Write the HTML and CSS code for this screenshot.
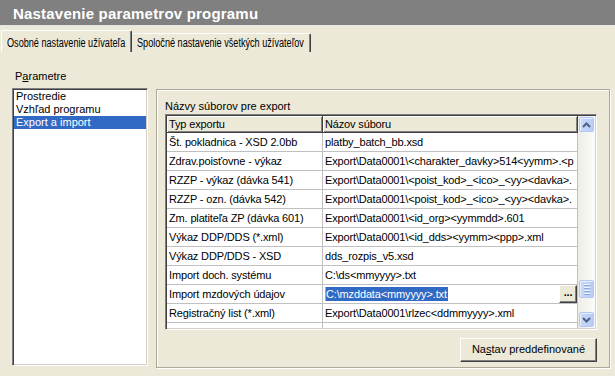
FILE: index.html
```html
<!DOCTYPE html>
<html lang="sk">
<head>
  <meta charset="utf-8">
  <title>Nastavenie parametrov programu</title>
  <link rel="stylesheet" href="styles.css">
</head>
<body>
  <div class="window">
    <div class="title-bar">Nastavenie parametrov programu</div>

    <div class="tabs">
      <div class="tab active"><span class="tab-text">Osobné nastavenie užívateľa</span></div>
      <div class="tab"><span class="tab-text">Spoločné nastavenie všetkých užívateľov</span></div>
    </div>

    <div class="tab-page">
      <div class="side">
        <div class="side-label">P<u>a</u>rametre</div>
        <div class="listbox">
          <div class="list-item">Prostredie</div>
          <div class="list-item">Vzhľad programu</div>
          <div class="list-item selected">Export a import</div>
        </div>
      </div>

      <div class="group">
        <div class="group-label">Názvy súborov pre export</div>
        <div class="grid">
          <div class="grid-table">
            <div class="row header">
              <div class="cell">Typ exportu</div>
              <div class="cell">Názov súboru</div>
            </div>
            <div class="row">
              <div class="cell">Št. pokladnica - XSD 2.0bb</div>
              <div class="cell">platby_batch_bb.xsd</div>
            </div>
            <div class="row">
              <div class="cell">Zdrav.poisťovne - výkaz</div>
              <div class="cell">Export\Data0001\&lt;charakter_davky&gt;514&lt;yymm&gt;.&lt;p</div>
            </div>
            <div class="row">
              <div class="cell">RZZP - výkaz (dávka 541)</div>
              <div class="cell">Export\Data0001\&lt;poist_kod&gt;_&lt;ico&gt;_&lt;yy&gt;&lt;davka&gt;.</div>
            </div>
            <div class="row">
              <div class="cell">RZZP - ozn. (dávka 542)</div>
              <div class="cell">Export\Data0001\&lt;poist_kod&gt;_&lt;ico&gt;_&lt;yy&gt;&lt;davka&gt;.</div>
            </div>
            <div class="row">
              <div class="cell">Zm. platiteľa ZP (dávka 601)</div>
              <div class="cell">Export\Data0001\&lt;id_org&gt;&lt;yymmdd&gt;.601</div>
            </div>
            <div class="row">
              <div class="cell">Výkaz DDP/DDS (*.xml)</div>
              <div class="cell">Export\Data0001\&lt;id_dds&gt;&lt;yymm&gt;&lt;ppp&gt;.xml</div>
            </div>
            <div class="row">
              <div class="cell">Výkaz DDP/DDS - XSD</div>
              <div class="cell">dds_rozpis_v5.xsd</div>
            </div>
            <div class="row">
              <div class="cell">Import doch. systému</div>
              <div class="cell">C:\ds&lt;mmyyyy&gt;.txt</div>
            </div>
            <div class="row">
              <div class="cell">Import mzdových údajov</div>
              <div class="cell editing">
                <span class="selection">C:\mzddata&lt;mmyyyy&gt;.txt</span>
                <span class="dots-btn">...</span>
              </div>
            </div>
            <div class="row">
              <div class="cell">Registračný list (*.xml)</div>
              <div class="cell">Export\Data0001\rlzec&lt;ddmmyyyy&gt;.xml</div>
            </div>
            <div class="row">
              <div class="cell"></div>
              <div class="cell"></div>
            </div>
          </div>

          <div class="scrollbar">
            <div class="sb-button">
              <svg width="9" height="6" viewBox="0 0 9 6"><polyline points="1,5 4.5,1.5 8,5" fill="none" stroke="#4d6185" stroke-width="2"/></svg>
            </div>
            <div class="sb-thumb">
              <span></span><span></span><span></span><span></span>
            </div>
            <div class="sb-button">
              <svg width="9" height="6" viewBox="0 0 9 6"><polyline points="1,1 4.5,4.5 8,1" fill="none" stroke="#4d6185" stroke-width="2"/></svg>
            </div>
          </div>
        </div>

        <div class="actions">
          <div class="button">Na<u>s</u>tav preddefinované</div>
        </div>
      </div>
    </div>
  </div>
</body>
</html>
```

FILE: styles.css
```css
body {
  margin: 0;
  background-color: #ece9d8;
  color: black;
  font-family: "Liberation Sans", Arial, sans-serif;
  font-size: 11px;
}

.window {
  width: 615px;
  height: 376px;
  overflow: hidden;
}

.title-bar {
  height: 25px;
  line-height: 27px;
  padding-left: 13px;
  background-color: #808080;
  border-bottom: 1px solid #e6e6e6;
  color: white;
  font-size: 15px;
  font-weight: bold;
  letter-spacing: 0.2px;
}

/* tab strip */
.tabs {
  display: flex;
  align-items: flex-end;
  height: 26px;
  padding-left: 1px;
}

.tab {
  box-sizing: border-box;
  height: 19px;
  padding: 2px 0 0 5px;
  border-top: 1px solid white;
  border-left: 1px solid white;
  border-right: 1px solid #404040;
  border-radius: 2px 2px 0 0;
  box-shadow: inset -1px 0 #808080;
  font-size: 12px;
  line-height: 14px;
  white-space: nowrap;
  overflow: hidden;
}

/* the original tab font is a condensed one */
.tab-text {
  display: inline-block;
  transform: scaleX(0.76);
  transform-origin: left center;
}

.tab.active {
  width: 131px;
  height: 22px;
  padding-top: 5px;
}

.tab:not(.active) {
  width: 179px;
  border-left: none;
}

/* page */
.tab-page {
  display: flex;
  gap: 8px;
  padding: 18px 0 0 12px;
}

.side {
  width: 136px;
}

.side-label {
  height: 13px;
  line-height: 13px;
  padding-left: 3px;
}

.listbox {
  box-sizing: border-box;
  height: 278px;
  margin-top: 5px;
  padding: 1px 0 0 0;
  background-color: white;
  border: 1px solid;
  border-color: #808080 #ffffff #ffffff #808080;
  box-shadow: inset 1px 1px #404040, inset -1px -1px #d4d0c8;
}

.list-item {
  height: 13px;
  line-height: 13px;
  margin-left: 1px;
  margin-right: 1px;
  padding-left: 2px;
}

.list-item.selected {
  background-color: #316ac5;
  color: white;
}

/* group frame */
.group {
  box-sizing: border-box;
  width: 454px;
  height: 279px;
  margin-top: 19px;
  padding: 10px 12px 5px 8px;
  border: 1px solid #aca899;
  box-shadow: inset 1px 1px #ffffff, 1px 1px #ffffff;
}

.group-label {
  height: 13px;
  line-height: 13px;
}

.grid {
  box-sizing: border-box;
  display: flex;
  height: 216px;
  margin-top: 1px;
  border: 1px solid;
  border-color: #808080 #ffffff #ffffff #808080;
  box-shadow: inset 1px 1px #404040, inset -1px -1px #d4d0c8;
  padding: 1px;
  overflow: hidden;
}

.grid-table {
  flex: 1;
  background-color: white;
  overflow: hidden;
}

.row {
  display: grid;
  grid-template-columns: 156px 1fr;
  height: 19px;
}

.cell {
  box-sizing: border-box;
  padding-left: 2px;
  border-right: 1px solid #c0c0c0;
  border-bottom: 1px solid #c0c0c0;
  line-height: 18px;
  letter-spacing: -0.15px;
  white-space: nowrap;
  overflow: hidden;
}

.row.header {
  height: 17px;
}

.row.header .cell {
  background-color: #ece9d8;
  border-right-color: #404040;
  border-bottom-color: #404040;
  box-shadow: inset 1px 1px #ffffff, inset -1px -1px #808080;
  line-height: 16px;
}

.cell.editing {
  display: flex;
  align-items: center;
  justify-content: space-between;
  padding-right: 0;
}

.selection {
  line-height: 14px;
  padding-right: 1px;
  background-color: #316ac5;
  border-left: 1px solid #d9a441;
  color: white;
}

.dots-btn {
  box-sizing: border-box;
  width: 18px;
  height: 18px;
  background-color: #ece9d8;
  border-top: 1px solid white;
  border-left: 1px solid white;
  border-right: 1px solid #404040;
  border-bottom: 1px solid #404040;
  box-shadow: inset -1px -1px #808080;
  font-weight: bold;
  line-height: 12px;
  text-align: center;
}

/* xp style scrollbar */
.scrollbar {
  display: flex;
  flex-direction: column;
  width: 17px;
  padding: 1px 1px 1px 1px;
  box-sizing: border-box;
  background: linear-gradient(to right, #eeede5, #fbfbf9);
}

.sb-button,
.sb-thumb {
  box-sizing: border-box;
  height: 15px;
  border: 1px solid #b4c8f6;
  border-radius: 2px;
  background: linear-gradient(to right, #c9d8fc, #b9cbf5);
  box-shadow: inset 1px 1px #e6eefc;
  display: flex;
  align-items: center;
  justify-content: center;
}

.sb-thumb {
  height: 18px;
  margin-top: auto;
  margin-bottom: 14px;
  flex-direction: column;
  gap: 1px;
}

.sb-thumb span {
  width: 6px;
  height: 1px;
  background-color: #eef4fe;
  border-bottom: 1px solid #8ca6e0;
}

/* button row */
.actions {
  display: flex;
  justify-content: flex-end;
  margin-top: 8px;
}

.button {
  box-sizing: border-box;
  width: 137px;
  height: 24px;
  line-height: 21px;
  text-align: center;
  background-color: #ece9d8;
  border-top: 1px solid white;
  border-left: 1px solid white;
  border-right: 1px solid #404040;
  border-bottom: 1px solid #404040;
  box-shadow: inset -1px -1px #808080;
}
```
